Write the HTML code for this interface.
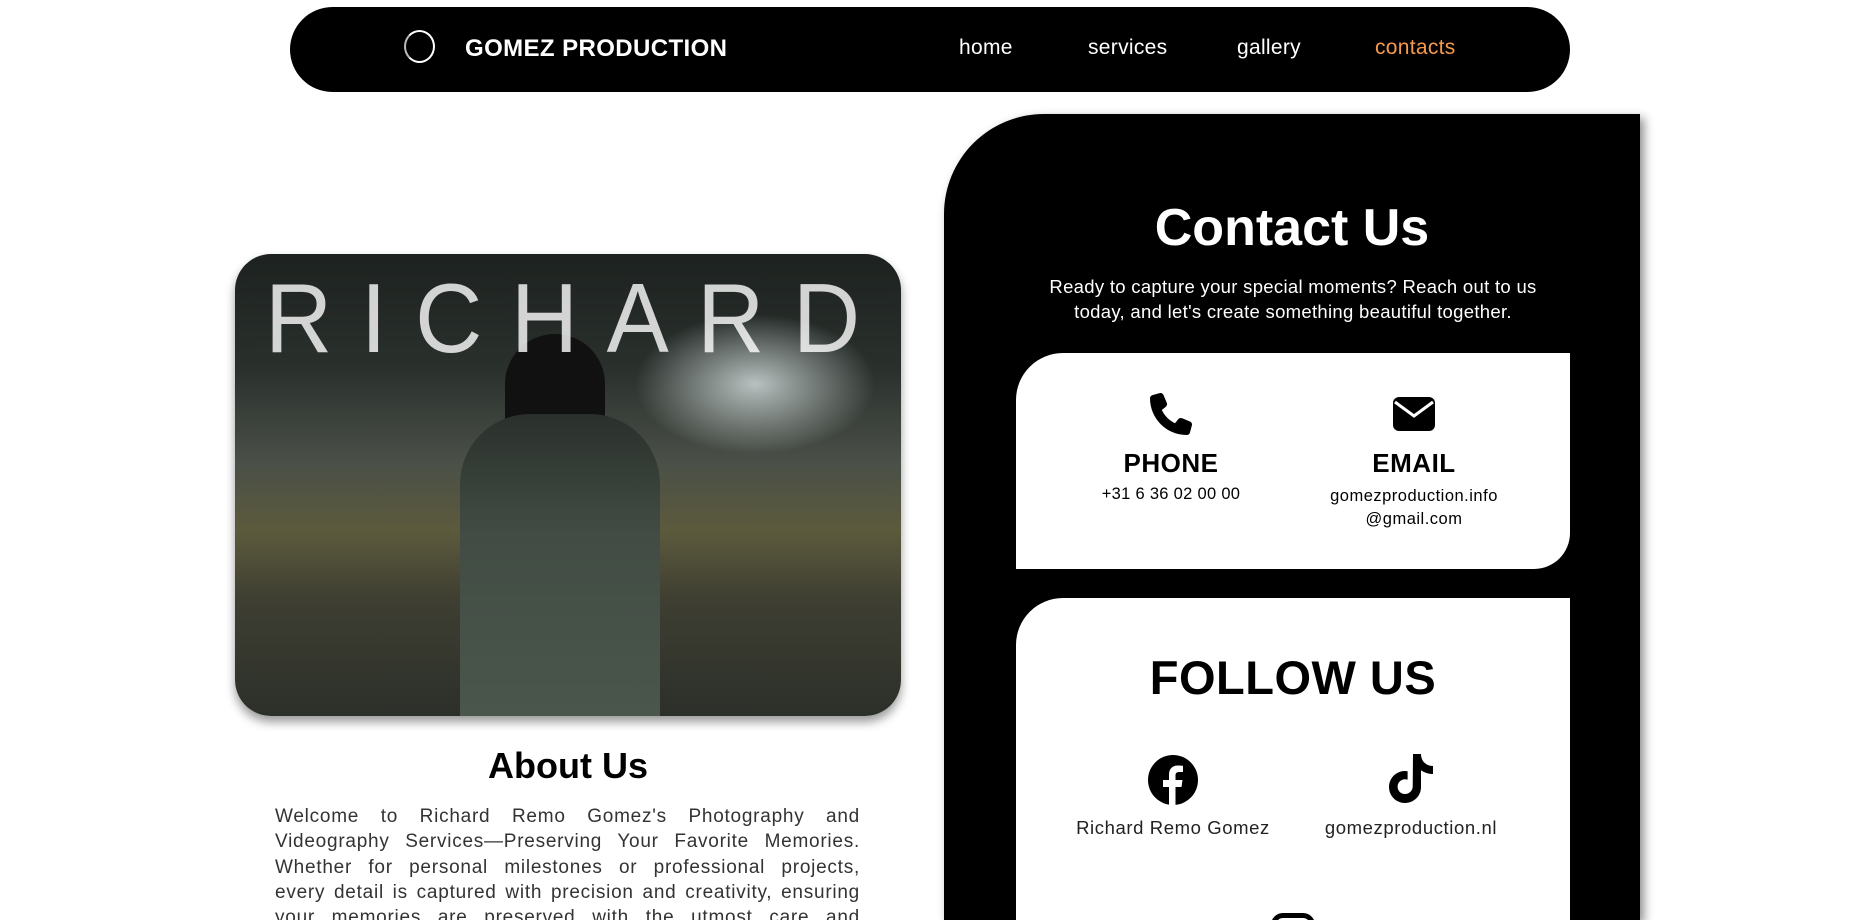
<!DOCTYPE html>
<html><head><meta charset="utf-8"><style>
*{margin:0;padding:0;box-sizing:border-box}
html,body{width:1858px;height:920px;overflow:hidden}
body{background:#fff;font-family:"Liberation Sans",sans-serif;position:relative}
.nav{position:absolute;left:290px;top:7px;width:1280px;height:85px;background:#000;border-radius:43px}
.logo{position:absolute;left:404px;top:30px;width:31px;height:33px;border:2px solid #fff;border-radius:50%;border-left-color:#bbb}
.brand{position:absolute;left:465px;top:35px;color:#fff;font-weight:bold;font-size:24px;letter-spacing:0.4px}
.panel{position:absolute;left:944px;top:114px;width:696px;height:806px;background:#000;border-top-left-radius:100px;box-shadow:4px 4px 10px rgba(0,0,0,.45)}
.t{position:absolute;text-align:center}
.card{position:absolute;left:1016px;width:554px;background:#fff}
.photo{position:absolute;left:235px;top:254px;width:666px;height:462px;border-radius:36px;overflow:hidden;box-shadow:0 6px 10px rgba(0,0,0,.4);
background:radial-gradient(ellipse 120px 70px at 520px 130px,rgba(230,240,240,.75),transparent),linear-gradient(180deg,#1d2220 0%,#2a302c 25%,#4a5048 45%,#5c5a3c 60%,#3e3e32 75%,#2c302a 100%)}
</style></head><body>
<div class="nav"></div>
<div class="logo"></div>
<div class="brand">GOMEZ PRODUCTION</div>
<a style="position:absolute;left:959px;top:36px;color:#fff;font-size:21px;letter-spacing:0.3px">home</a>
<a style="position:absolute;left:1088px;top:36px;color:#fff;font-size:21px;letter-spacing:0.3px">services</a>
<a style="position:absolute;left:1237px;top:36px;color:#fff;font-size:21px;letter-spacing:0.3px">gallery</a>
<a style="position:absolute;left:1375px;top:36px;color:#f59a4d;font-size:21px;letter-spacing:0.3px">contacts</a>

<div class="photo">
<div style="position:absolute;left:270px;top:80px;width:100px;height:120px;background:#111;border-radius:50px 50px 20px 20px"></div>
<div style="position:absolute;left:225px;top:160px;width:200px;height:302px;background:linear-gradient(#2a302c,#424c44 40%,#4a564c);border-radius:70px 70px 0 0"></div>
<div style="position:absolute;left:30px;top:8px;color:rgba(255,255,255,.8);font-size:98px;font-weight:normal;letter-spacing:30px;transform:scaleX(0.95);transform-origin:left;white-space:nowrap">RICHARD</div>
</div>
<div class="t" style="left:235px;width:666px;top:745px;font-size:36px;font-weight:bold">About Us</div>
<div style="position:absolute;left:275px;top:804px;width:585px;font-size:19px;line-height:25.3px;text-align:justify;color:#333;letter-spacing:0.75px;word-spacing:1px">Welcome to Richard Remo Gomez's Photography and Videography Services—Preserving Your Favorite Memories. Whether for personal milestones or professional projects, every detail is captured with precision and creativity, ensuring your memories are preserved with the utmost care and distinction.</div>

<div class="panel"></div>
<div class="t" style="left:944px;width:696px;top:198px;color:#fff;font-size:52px;font-weight:bold">Contact Us</div>
<div class="t" style="left:1030px;width:526px;top:274px;color:#fff;font-size:18.5px;line-height:25px;letter-spacing:0.3px">Ready to capture your special moments? Reach out to us today, and let's create something beautiful together.</div>

<div class="card" style="top:353px;height:216px;border-top-left-radius:47px;border-bottom-right-radius:36px"></div>
<svg style="position:absolute;left:1150px;top:393px" width="42" height="42" viewBox="0 0 512 512"><path d="M164.9 24.6c-7.7-18.6-28-28.5-47.4-23.2l-88 24C12.1 30.2 0 46 0 64c0 247.4 200.6 448 448 448 18 0 33.8-12.1 38.6-29.5l24-88c5.3-19.4-4.6-39.7-23.2-47.4l-96-40c-16.3-6.8-35.2-2.1-46.3 11.6L304.7 368C234.3 334.7 177.3 277.7 144 207.3l49.3-40.3c13.7-11.2 18.4-30 11.6-46.3l-40-96z" fill="#000"/></svg>
<svg style="position:absolute;left:1393px;top:397px" width="42" height="34" viewBox="0 0 42 34"><rect x="0" y="0" width="42" height="34" rx="6" fill="#000"/><path d="M2 5 L21 19 L40 5" stroke="#fff" stroke-width="3" fill="none"/></svg>
<div class="t" style="left:1071px;width:200px;top:448px;font-size:26px;font-weight:bold;letter-spacing:0.5px">PHONE</div>
<div class="t" style="left:1071px;width:200px;top:485px;font-size:16.5px;letter-spacing:0.3px">+31 6 36 02 00 00</div>
<div class="t" style="left:1314px;width:200px;top:448px;font-size:26px;font-weight:bold;letter-spacing:0.5px">EMAIL</div>
<div class="t" style="left:1294px;width:240px;top:485px;font-size:16.5px;line-height:23px;letter-spacing:0.5px">gomezproduction.info<br>@gmail.com</div>

<div class="card" style="top:598px;height:322px;border-top-left-radius:47px"></div>
<div class="t" style="left:1016px;width:554px;top:650px;font-size:47px;font-weight:bold;letter-spacing:0.5px">FOLLOW US</div>
<svg style="position:absolute;left:1148px;top:755px" width="50" height="50" viewBox="0 0 50 50"><circle cx="25" cy="25" r="25" fill="#000"/><path d="M27.5 50V32h6l1-7h-7v-4.5c0-2 .8-3.5 3.7-3.5H35v-6.2c-1-.1-3-.3-5.3-.3-5.2 0-8.7 3.2-8.7 9V25h-6v7h6v18z" fill="#fff"/></svg>
<svg style="position:absolute;left:1389px;top:754px" width="46" height="50" viewBox="0 0 46 50"><path d="M24 0h8c0 7 5 12 12 12v8c-4.5 0-8.5-1.4-12-3.8V33c0 9-7.2 16-16 16S0 42 0 33s7.2-16 16-16c1 0 1.8.1 2.6.3v8.5c-.8-.3-1.7-.5-2.6-.5-4 0-7.4 3.3-7.4 7.4S12 40 16 40s7.7-3.3 7.7-7.4z" fill="#000"/></svg>
<div class="t" style="left:1053px;width:240px;top:817px;font-size:18.5px;color:#222;letter-spacing:0.6px">Richard Remo Gomez</div>
<div class="t" style="left:1291px;width:240px;top:817px;font-size:18.5px;color:#222;letter-spacing:0.6px">gomezproduction.nl</div>
<div style="position:absolute;left:1271px;top:913px;width:44px;height:44px;border:5px solid #000;border-radius:12px"></div>
</body></html>
